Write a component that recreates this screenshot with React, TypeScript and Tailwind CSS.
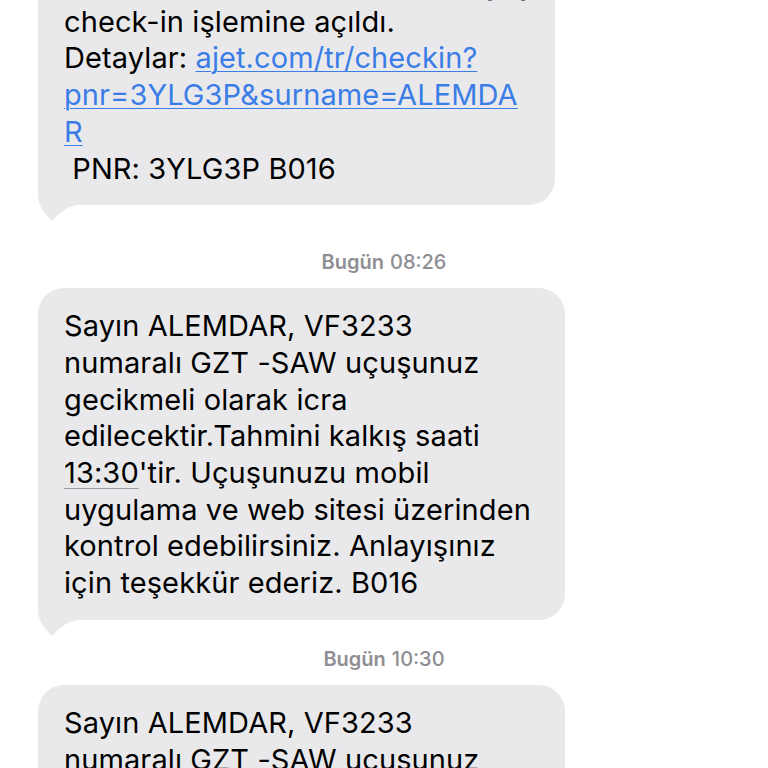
import React from "react";

const font = { fontFamily: "Inter, 'Noto Sans', sans-serif" };

function Tail() {
  return (
    <svg
      className="absolute bottom-[-17px] left-0"
      width="46"
      height="44"
      viewBox="0 -26 46 44"
      fill="#e9e9eb"
    >
      <path d="M0 -26 L0 -8 C1 3 7 11 15 17 C20 9 28 3 44 0 L44 -26 Z" />
    </svg>
  );
}

function Bubble({ width, children }: { width: string; children: React.ReactNode }) {
  return (
    <div className={`relative ${width}`}>
      <Tail />
      <div className="relative rounded-[26px] bg-[#e9e9eb] pb-[18px] pl-[26px] pt-[20px] text-[29px] leading-[36.7px] tracking-[0.1px] text-black">
        {children}
      </div>
    </div>
  );
}

function Stamp({ day, time }: { day: string; time: string }) {
  return (
    <div className="flex justify-center gap-[6px] text-[20px] leading-[24px] text-[#8e8e93]">
      <span className="font-semibold">{day}</span>
      <span className="font-medium">{time}</span>
    </div>
  );
}

const link = "text-[#3b7de6] underline decoration-1 underline-offset-[3px]";

export default function App() {
  return (
    <main className="h-[768px] overflow-hidden bg-white" style={font}>
      <div className="mt-[-53px] flex flex-col px-[38px]">
        <Bubble width="w-[517px]">
          <div className="whitespace-nowrap">ALEMDAR, VF3233 numaralı uçuş</div>
          <div className="whitespace-nowrap">check-in işlemine açıldı.</div>
          <div className="whitespace-nowrap">
            Detaylar: <span className={link}>ajet.com/tr/checkin?</span>
          </div>
          <div className="whitespace-nowrap">
            <span className={link}>pnr=3YLG3P&amp;surname=ALEMDA</span>
          </div>
          <div className="whitespace-nowrap">
            <span className={link}>R</span>
          </div>
          <div className="whitespace-pre"> PNR: 3YLG3P B016</div>
        </Bubble>

        <div className="mt-[45px] mb-[14px]">
          <Stamp day="Bugün" time="08:26" />
        </div>

        <Bubble width="w-[527px]">
          <div className="whitespace-nowrap">Sayın ALEMDAR, VF3233</div>
          <div className="whitespace-nowrap">numaralı GZT -SAW uçuşunuz</div>
          <div className="whitespace-nowrap">gecikmeli olarak icra</div>
          <div className="whitespace-nowrap">edilecektir.Tahmini kalkış saati</div>
          <div className="whitespace-nowrap">
            <span className="underline decoration-[#9a9a9e] decoration-1 underline-offset-[5px]">13:30</span>'tir. Uçuşunuzu mobil
          </div>
          <div className="whitespace-nowrap">uygulama ve web sitesi üzerinden</div>
          <div className="whitespace-nowrap">kontrol edebilirsiniz. Anlayışınız</div>
          <div className="whitespace-nowrap">için teşekkür ederiz. B016</div>
        </Bubble>

        <div className="mt-[27px] mb-[14px]">
          <Stamp day="Bugün" time="10:30" />
        </div>

        <Bubble width="w-[527px]">
          <div className="whitespace-nowrap">Sayın ALEMDAR, VF3233</div>
          <div className="whitespace-nowrap">numaralı GZT -SAW uçuşunuz</div>
          <div className="whitespace-nowrap">gecikmeli olarak icra</div>
        </Bubble>
      </div>
    </main>
  );
}
